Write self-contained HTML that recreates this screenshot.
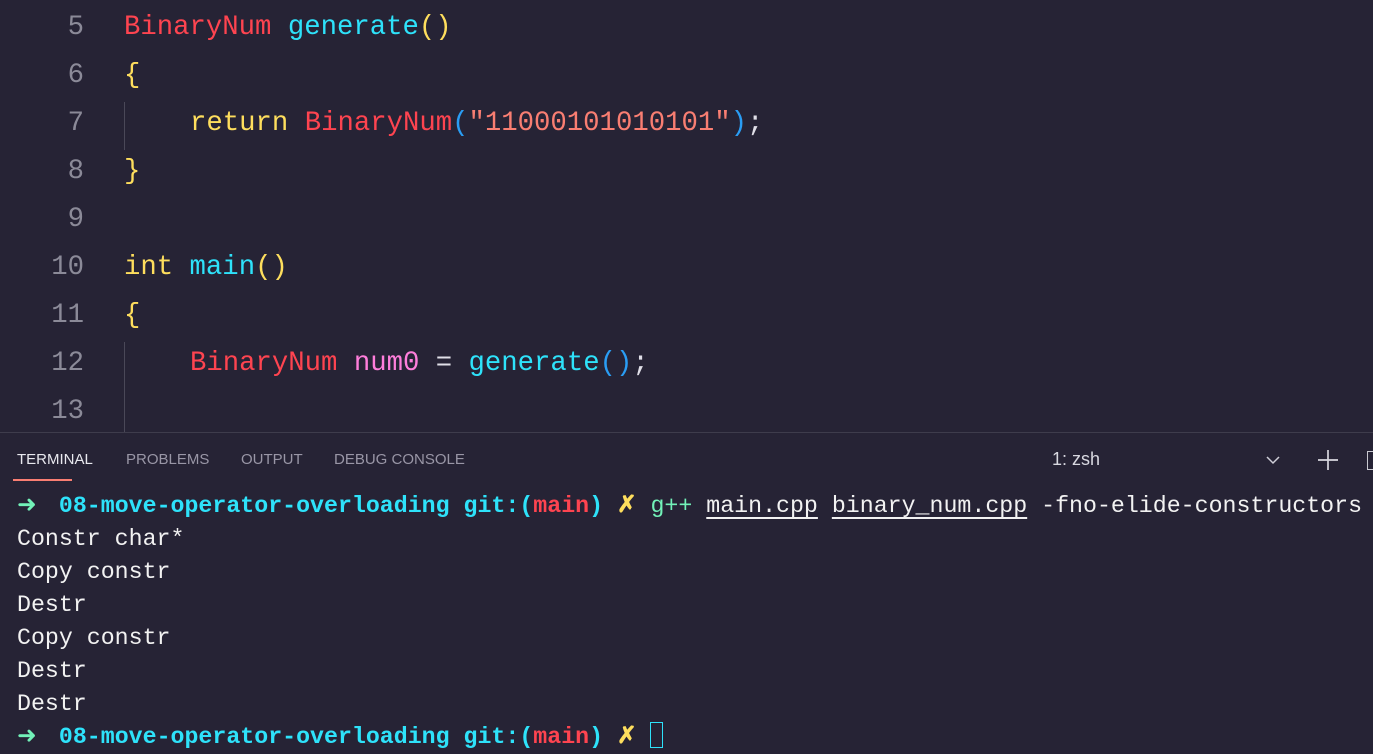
<!DOCTYPE html>
<html><head><style>
body{margin:0;width:1373px;height:743px;background:#262335;overflow:hidden;position:relative;font-family:"Liberation Mono",monospace}
.l{position:absolute;white-space:pre;font-size:27.3px;line-height:48px;height:48px}
.n{position:absolute;width:84px;text-align:right;color:#8b8a98;font-size:27.3px;line-height:48px}
.r{color:#fe4450}.c{color:#2ee2fa}.y{color:#fede5d}.o{color:#f97e72}.p{color:#ff7edb}.b{color:#2a9df4}.w{color:#e0dfe8}
.g{position:absolute;left:124px;width:1px;background:#4a4858}
.t{position:absolute;left:17px;white-space:pre;font-size:23.25px;line-height:33px;color:#f2f2f2}
.a{display:inline-block;width:14px;color:#72f1b8}
.tab{position:absolute;top:451px;font-family:"Liberation Sans",sans-serif;font-size:15px;color:#9996a6}
u{text-decoration:underline;text-underline-offset:5px}
</style></head><body>
<div class="n" style="top:4px">5</div><div class="l" style="top:4px;left:124px"><span class="r">BinaryNum</span> <span class="c">generate</span><span class="y">()</span></div>
<div class="n" style="top:52px">6</div><div class="l" style="top:52px;left:124px"><span class="y">{</span></div>
<div class="n" style="top:100px">7</div><div class="l" style="top:100px;left:190px"><span class="y">return</span> <span class="r">BinaryNum</span><span class="b">(</span><span class="o">"11000101010101"</span><span class="b">)</span><span class="w">;</span></div>
<div class="g" style="top:102px;height:48px"></div>
<div class="n" style="top:148px">8</div><div class="l" style="top:148px;left:124px"><span class="y">}</span></div>
<div class="n" style="top:196px">9</div>
<div class="n" style="top:244px">10</div><div class="l" style="top:244px;left:124px"><span class="y">int</span> <span class="c">main</span><span class="y">()</span></div>
<div class="n" style="top:292px">11</div><div class="l" style="top:292px;left:124px"><span class="y">{</span></div>
<div class="n" style="top:340px">12</div><div class="l" style="top:340px;left:190px"><span class="r">BinaryNum</span> <span class="p">num0</span> <span class="w">=</span> <span class="c">generate</span><span class="b">()</span><span class="w">;</span></div>
<div class="g" style="top:342px;height:90px"></div>
<div class="n" style="top:388px">13</div>
<div style="position:absolute;top:432px;left:0;width:1373px;height:1px;background:#3e3c4c"></div>
<div class="tab" style="left:17px;color:#e8e8ee">TERMINAL</div>
<div style="position:absolute;left:13px;top:479px;width:59px;height:2px;background:#f97e72"></div>
<div class="tab" style="left:126px">PROBLEMS</div>
<div class="tab" style="left:241px">OUTPUT</div>
<div class="tab" style="left:334px">DEBUG CONSOLE</div>
<div class="tab" style="left:1052px;font-size:18px;top:449px;color:#d8d8e0">1: zsh</div>
<svg style="position:absolute;left:1265px;top:453px" width="16" height="14"><path d="M2 4l6 6 6-6" stroke="#cfcfd8" stroke-width="1.5" fill="none"/></svg>
<svg style="position:absolute;left:1317px;top:449px" width="22" height="22"><path d="M11 1v20M1 11h20" stroke="#d8d8e0" stroke-width="1.7"/></svg>
<div style="position:absolute;left:1367px;top:451px;width:8px;height:17px;border:1.5px solid #c8c8d0"></div>
<div class="t" style="top:490px"><span class="a">➜</span>  <span class="c" style="font-weight:bold">08-move-operator-overloading git:(</span><span class="r" style="font-weight:bold">main</span><span class="c" style="font-weight:bold">)</span> <span class="y" style="font-weight:bold">✗</span> <span style="color:#72f1b8">g++</span> <u>main.cpp</u> <u>binary_num.cpp</u> -fno-elide-constructors</div>
<div class="t" style="top:523px">Constr char*</div>
<div class="t" style="top:556px">Copy constr</div>
<div class="t" style="top:589px">Destr</div>
<div class="t" style="top:622px">Copy constr</div>
<div class="t" style="top:655px">Destr</div>
<div class="t" style="top:688px">Destr</div>
<div class="t" style="top:721px"><span class="a">➜</span>  <span class="c" style="font-weight:bold">08-move-operator-overloading git:(</span><span class="r" style="font-weight:bold">main</span><span class="c" style="font-weight:bold">)</span> <span class="y" style="font-weight:bold">✗</span> <span style="display:inline-block;width:11px;height:24px;border:1.5px solid #2ee2fa;vertical-align:-5px"></span></div>
</body></html>
